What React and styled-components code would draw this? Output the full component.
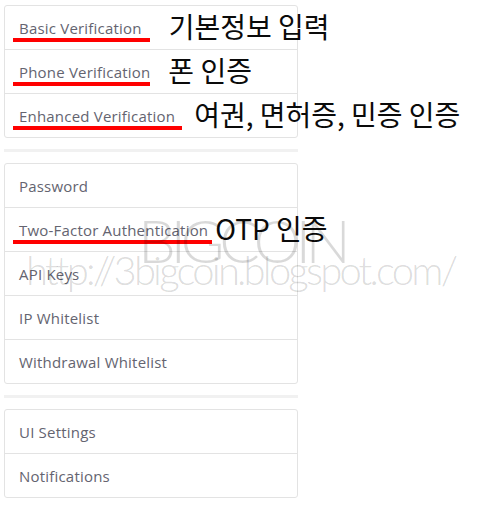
import styled, { createGlobalStyle } from 'styled-components';

const GlobalStyle = createGlobalStyle`
  html, body {
    margin: 0;
    background: #ffffff;
  }
  body {
    font-family: "Open Sans", "Liberation Sans", sans-serif;
  }
`;

const Page = styled.div`
  position: relative;
  width: 294px;
  padding: 5px 0 0 4px;
`;

const Card = styled.ul`
  list-style: none;
  margin: 0;
  padding: 0;
  border: 1px solid #e3e3e3;
  border-radius: 3px;
`;

const Item = styled.li`
  display: flex;
  align-items: center;
  height: 43px;
  padding-left: 14px;
  border-top: 1px solid #e3e3e3;
  font-size: 15px;
  letter-spacing: 0.2px;
  color: #646470;
  white-space: nowrap;

  &:first-child {
    border-top: none;
  }
`;

const Mark = styled.span`
  position: relative;

  &::after {
    content: '';
    position: absolute;
    left: -6px;
    right: ${(p) => -p.$ext}px;
    top: 100%;
    height: 4px;
    background: #ff0000;
  }
`;

const Note = styled.span`
  margin-left: ${(p) => p.$gap}px;
  font-family: "Noto Sans CJK KR", "Noto Sans", sans-serif;
  font-size: 28px;
  font-weight: 400;
  letter-spacing: 0;
  line-height: 1;
  color: #0a0a0a;
  position: relative;
  top: -2px;
`;

const Divider = styled.div`
  height: 3px;
  margin: 11px 0;
  background: #f1f1f1;
`;

const Watermark = styled.div`
  position: absolute;
  left: 0;
  top: 0;
  width: 480px;
  pointer-events: none;
  color: rgba(0, 0, 0, 0.15);
  font-family: "Lato", "Liberation Sans", sans-serif;
  font-weight: 300;
  white-space: nowrap;
`;

const Brand = styled.div`
  position: absolute;
  left: 138px;
  top: 210px;
  font-size: 60px;
  letter-spacing: -5.5px;
  line-height: 1;
`;

const Url = styled.div`
  position: absolute;
  left: 26px;
  top: 250px;
  font-size: 40px;
  letter-spacing: -2.8px;
  line-height: 1;
`;

const groups = [
  [
    { label: 'Basic Verification', note: '기본정보 입력', ext: 8, gap: 27 },
    { label: 'Phone Verification', note: '폰 인증', ext: 0, gap: 18 },
    { label: 'Enhanced Verification', note: '여권, 면허증, 민증 인증', ext: 7, gap: 19 },
  ],
  [
    { label: 'Password' },
    { label: 'Two-Factor Authentication', note: 'OTP 인증', ext: 4, gap: 7 },
    { label: 'API Keys' },
    { label: 'IP Whitelist' },
    { label: 'Withdrawal Whitelist' },
  ],
  [{ label: 'UI Settings' }, { label: 'Notifications' }],
];

export default function App() {
  return (
    <>
      <GlobalStyle />
      <Page>
        {groups.map((items, i) => (
          <div key={i}>
            {i > 0 && <Divider />}
            <Card>
              {items.map((it) => (
                <Item key={it.label}>
                  {it.note ? (
                    <>
                      <Mark $ext={it.ext}>{it.label}</Mark>
                      <Note $gap={it.gap}>{it.note}</Note>
                    </>
                  ) : (
                    it.label
                  )}
                </Item>
              ))}
            </Card>
          </div>
        ))}
      </Page>
      <Watermark>
        <Brand>BIGCOIN</Brand>
        <Url>http://3bigcoin.blogspot.com/</Url>
      </Watermark>
    </>
  );
}
